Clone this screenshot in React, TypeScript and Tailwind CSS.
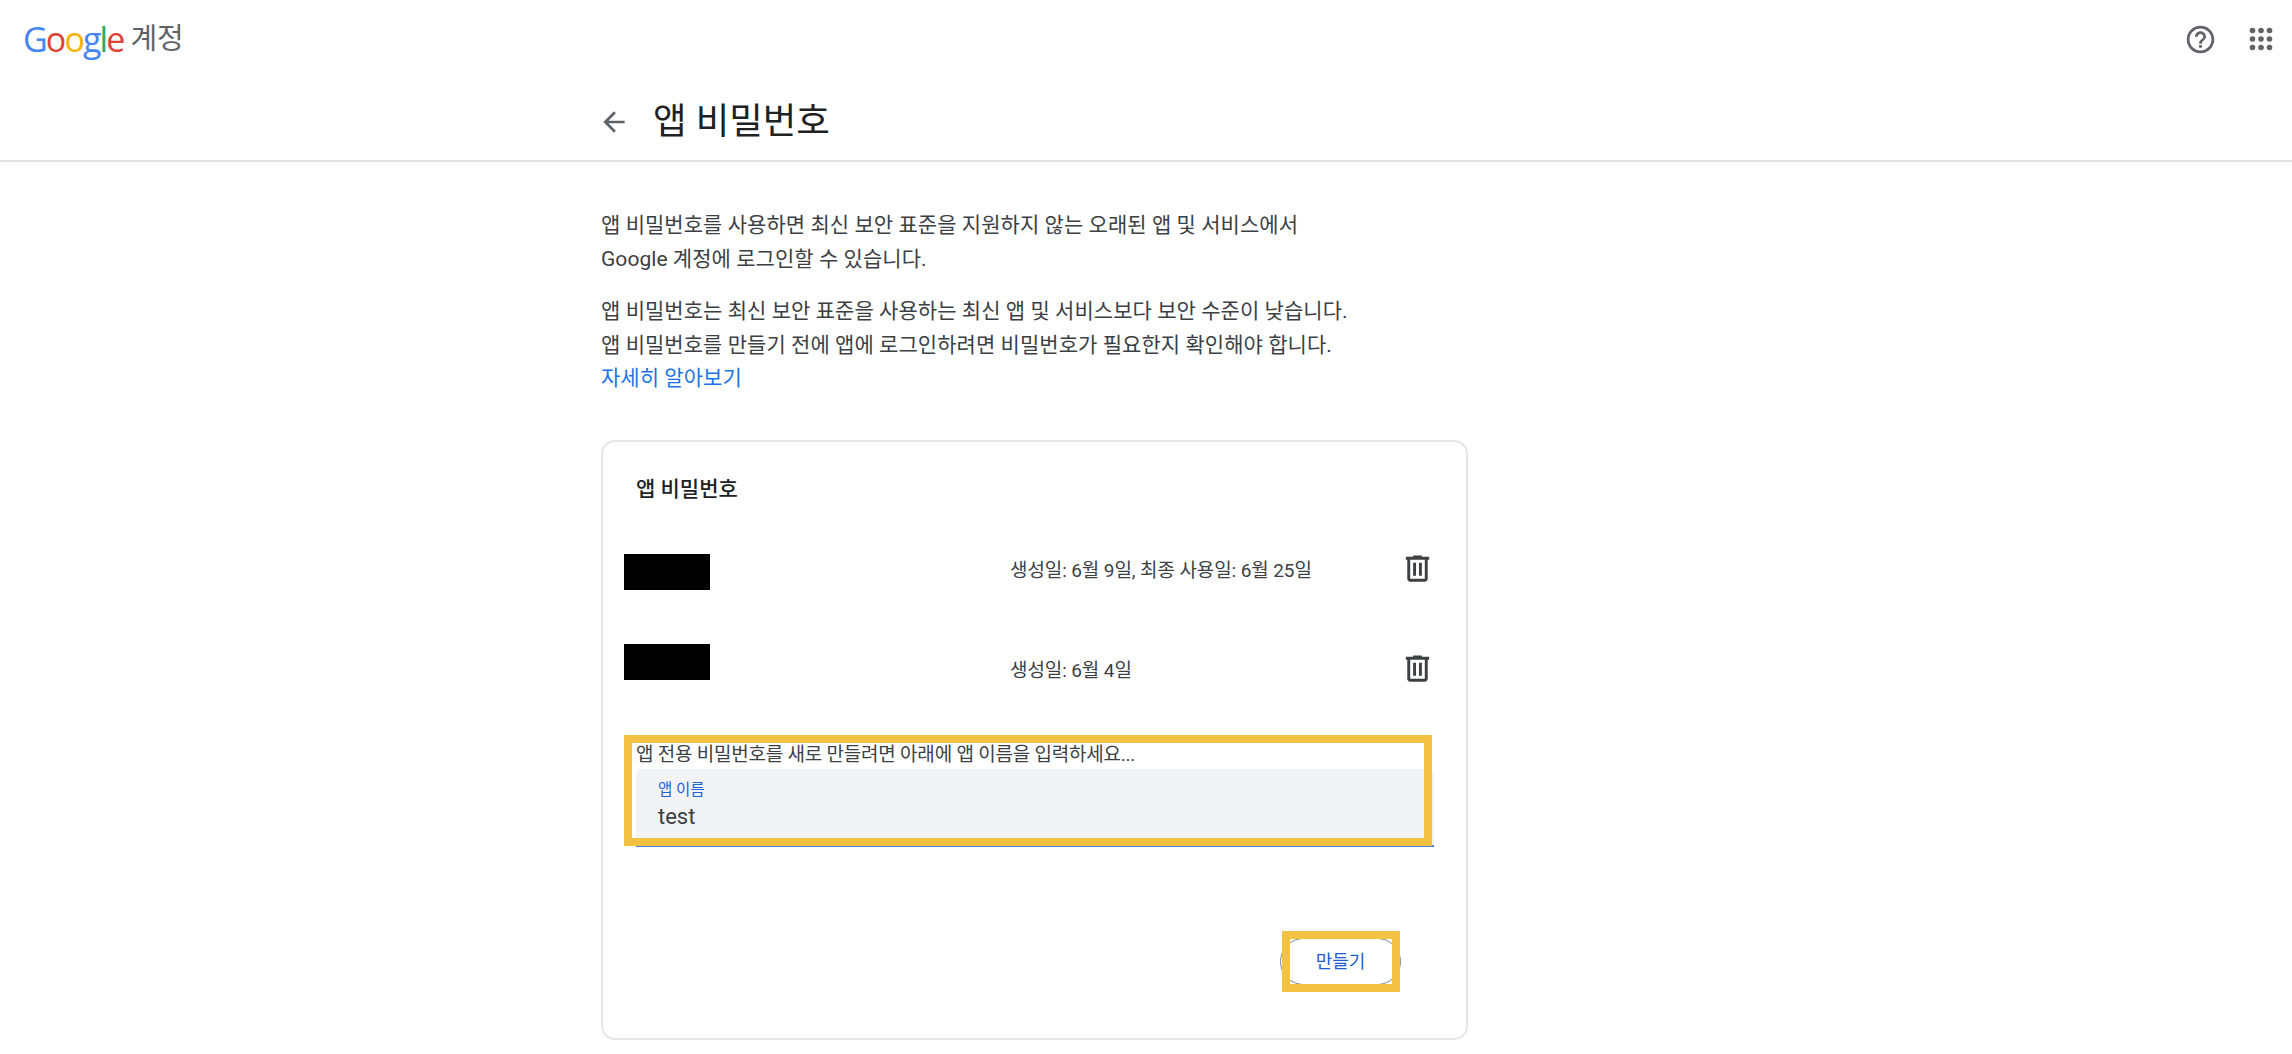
import React from 'react'

const SANS = 'font-["Roboto","Noto_Sans_CJK_KR",sans-serif]'

function GoogleMark() {
  return (
    <span className='font-["Open_Sans",sans-serif] text-[34px] leading-none tracking-[-1.9px] font-medium'>
      <span className="text-[#4285f4]">G</span>
      <span className="text-[#db4437]">o</span>
      <span className="text-[#f4b400]">o</span>
      <span className="text-[#4285f4]">g</span>
      <span className="text-[#34a853]">l</span>
      <span className="text-[#db4437]">e</span>
    </span>
  )
}

function HelpIcon() {
  return (
    <svg width="33" height="33" viewBox="0 0 24 24" fill="#5f6368">
      <path d="M11 18h2v-2h-2v2zm1-16C6.48 2 2 6.48 2 12s4.48 10 10 10 10-4.48 10-10S17.52 2 12 2zm0 18c-4.41 0-8-3.59-8-8s3.59-8 8-8 8 3.59 8 8-3.59 8-8 8zm0-14c-2.21 0-4 1.79-4 4h2c0-1.1.9-2 2-2s2 .9 2 2c0 2-3 1.75-3 5h2c0-2.25 3-2.5 3-5 0-2.21-1.79-4-4-4z" />
    </svg>
  )
}

function AppsIcon() {
  return (
    <svg width="24" height="24" viewBox="0 0 24 24" fill="#5f6368">
      {[3.5, 12, 20.5].map((cy) =>
        [3.5, 12, 20.5].map((cx) => <circle key={`${cx}-${cy}`} cx={cx} cy={cy} r="2.8" />)
      )}
    </svg>
  )
}

function TrashIcon() {
  return (
    <svg width="35" height="35" viewBox="0 0 24 24" fill="#3c4043">
      <path d="M15 4V3H9v1H4v2h1v13c0 1.1.9 2 2 2h10c1.1 0 2-.9 2-2V6h1V4h-5zm2 15H7V6h10v13z" />
      <path d="M9 8h2v9H9zm4 0h2v9h-2z" />
    </svg>
  )
}

function BackIcon() {
  return (
    <svg width="32" height="32" viewBox="0 0 24 24" fill="#5f6368">
      <path d="M20 11H7.83l5.59-5.59L12 4l-8 8 8 8 1.41-1.41L7.83 13H20v-2z" />
    </svg>
  )
}

function PasswordRow({ date, dateTop, iconTop, className }: { date: string; dateTop: string; iconTop: string; className: string }) {
  return (
    <div className={`flex items-start h-[36px] ${className}`}>
      <div className="w-[86px] h-[36px] bg-black shrink-0" />
      <div className={`ml-[300px] w-[390px] shrink-0 text-[19px] leading-[24px] tracking-[-0.1px] text-[#3c4043] ${dateTop}`}>{date}</div>
      <div className={iconTop}>
        <TrashIcon />
      </div>
    </div>
  )
}

export default function App() {
  return (
    <div className={`min-h-screen bg-white ${SANS}`}>
      <header className="h-[162px] border-b-2 border-[#e0e0e0]">
        <div className="h-[78px] flex items-center justify-between pl-[23px] pr-[19px]">
          <div className="flex items-center gap-[7px]">
            <GoogleMark />
            <span className="text-[29px] leading-none text-[#5f6368]">계정</span>
          </div>
          <div className="flex items-center gap-[32px]">
            <HelpIcon />
            <AppsIcon />
          </div>
        </div>
        <div className="flex items-center pl-[598px] h-[82px] pt-[6px]">
          <BackIcon />
          <h1 className="ml-[23px] text-[36.5px] leading-none font-normal text-[#202124]">앱 비밀번호</h1>
        </div>
      </header>

      <main className="ml-[601px] w-[867px]">
        <div className="pt-[47px] text-[21px] leading-[33.5px] text-[#3c4043] tracking-[0.05px]">
          <p>
            앱 비밀번호를 사용하면 최신 보안 표준을 지원하지 않는 오래된 앱 및 서비스에서
            <br />
            Google 계정에 로그인할 수 있습니다.
          </p>
          <p className="mt-[19px]">
            앱 비밀번호는 최신 보안 표준을 사용하는 최신 앱 및 서비스보다 보안 수준이 낮습니다.
            <br />
            앱 비밀번호를 만들기 전에 앱에 로그인하려면 비밀번호가 필요한지 확인해야 합니다.
          </p>
          <a className="block text-[#1a73e8]">자세히 알아보기</a>
        </div>

        <section className="mt-[44.5px] h-[600px] rounded-[14px] border-2 border-[#e5e6e8] pl-[21px]">
          <h2 className="ml-[12px] mt-[33px] text-[21px] leading-[28px] font-medium text-[#202124]">앱 비밀번호</h2>

          <PasswordRow className="mt-[51px]" date="생성일: 6월 9일, 최종 사용일: 6월 25일" dateTop="mt-[5px]" iconTop="-mt-[3.5px]" />
          <PasswordRow className="mt-[54px]" date="생성일: 6월 4일" dateTop="mt-[15px]" iconTop="mt-[6.5px]" />

          <div className="relative ml-[12px] mt-[63px] w-[798px]">
            <p className="h-[26px] text-[19px] leading-[24px] tracking-[-0.22px] text-[#3c4043]">앱 전용 비밀번호를 새로 만들려면 아래에 앱 이름을 입력하세요...</p>
            <div className="h-[78px] bg-[#f1f3f4] border-b-2 border-[#4a80e0] rounded-t-[6px] pl-[22px] pt-[11px]">
              <div className="text-[15.5px] leading-[20px] text-[#1a64d8]">앱 이름</div>
              <div className="mt-[4px] text-[22px] leading-[26px] text-[#3c4043]">test</div>
            </div>
            <div className="absolute left-[-12px] top-[-8px] w-[808px] h-[111px] border-[8px] border-[#f4c243]" />
          </div>

          <div className="flex justify-end mr-[65px] mt-[91px]">
            <button className="relative w-[121px] h-[47px] rounded-full border border-[#80868b] bg-white text-[18px] text-[#1f5ad0]">
              만들기
              <span className="absolute left-[1px] top-[-8px] w-[118px] h-[61px] border-[8px] border-[#f4c243]" />
            </button>
          </div>
        </section>
      </main>
    </div>
  )
}
